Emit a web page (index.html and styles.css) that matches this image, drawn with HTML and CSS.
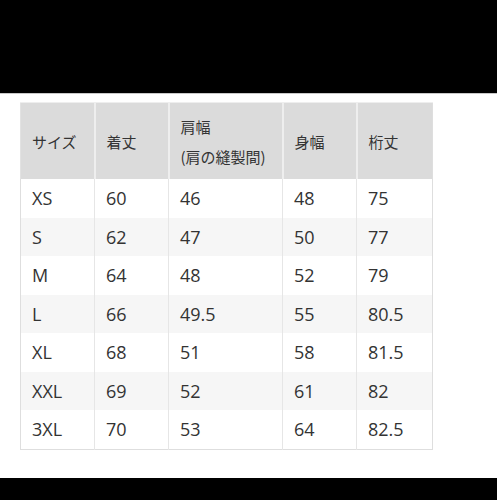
FILE: index.html
```html
<!DOCTYPE html>
<html lang="ja">
<head>
<meta charset="utf-8">
<link rel="stylesheet" href="styles.css">
</head>
<body>
<div class="bar bar-top"></div>
<main class="main">
  <table class="sizes">
    <colgroup>
      <col class="c1"><col class="c2"><col class="c3"><col class="c4"><col class="c5">
    </colgroup>
    <thead>
      <tr>
        <th>サイズ</th>
        <th>着丈</th>
        <th class="two">肩幅<br>(肩の縫製間)</th>
        <th>身幅</th>
        <th>桁丈</th>
      </tr>
    </thead>
    <tbody>
      <tr><td>XS</td><td>60</td><td>46</td><td>48</td><td>75</td></tr>
      <tr><td>S</td><td>62</td><td>47</td><td>50</td><td>77</td></tr>
      <tr><td>M</td><td>64</td><td>48</td><td>52</td><td>79</td></tr>
      <tr><td>L</td><td>66</td><td>49.5</td><td>55</td><td>80.5</td></tr>
      <tr><td>XL</td><td>68</td><td>51</td><td>58</td><td>81.5</td></tr>
      <tr><td>XXL</td><td>69</td><td>52</td><td>61</td><td>82</td></tr>
      <tr><td>3XL</td><td>70</td><td>53</td><td>64</td><td>82.5</td></tr>
    </tbody>
  </table>
</main>
<div class="bar bar-bottom"></div>
</body>
</html>
```
FILE: styles.css
```css
html, body {
  margin: 0;
  padding: 0;
  background: #ffffff;
}
body {
  width: 500px;
  height: 500px;
  display: flex;
  flex-direction: column;
  font-family: "Open Sans", "Noto Sans CJK JP", sans-serif;
  color: #333333;
  overflow: hidden;
}
.bar {
  width: 497px;
  background: #000000;
}
.bar-top {
  height: 93px;
  border-bottom: 1px solid #c8c8c8;
}
.bar-bottom {
  height: 22px;
}
.main {
  flex: 1;
  padding: 8px 0 0 20px;
}
.sizes {
  border-collapse: collapse;
  table-layout: fixed;
  width: 412px;
  border: 1px solid #dedede;
}
.c1 { width: 74px; }
.c2 { width: 74px; }
.c3 { width: 114px; }
.c4 { width: 74px; }
.c5 { width: 76px; }
.sizes th {
  background: #dbdbdb;
  font-family: "Noto Sans CJK JP", "Open Sans", sans-serif;
  font-size: 15px;
  font-weight: normal;
  text-align: left;
  height: 74px;
  padding: 2px 0 0 11px;
  border-left: 2px solid #eeeeee;
  border-top: 1px solid #eeeeee;
  vertical-align: middle;
  line-height: 30px;
}
.sizes th:first-child {
  border-left: 1px solid #e2e2e2;
}
.sizes td {
  height: 38.5px;
  padding: 0 0 0 11px;
  border-left: 1px solid #e6e6e6;
  vertical-align: middle;
  font-size: 18px;
  line-height: 22px;
}
.sizes td:first-child {
  border-left: 1px solid #dedede;
}
.sizes tbody tr:nth-child(even) td {
  background: #f6f6f6;
}
```
